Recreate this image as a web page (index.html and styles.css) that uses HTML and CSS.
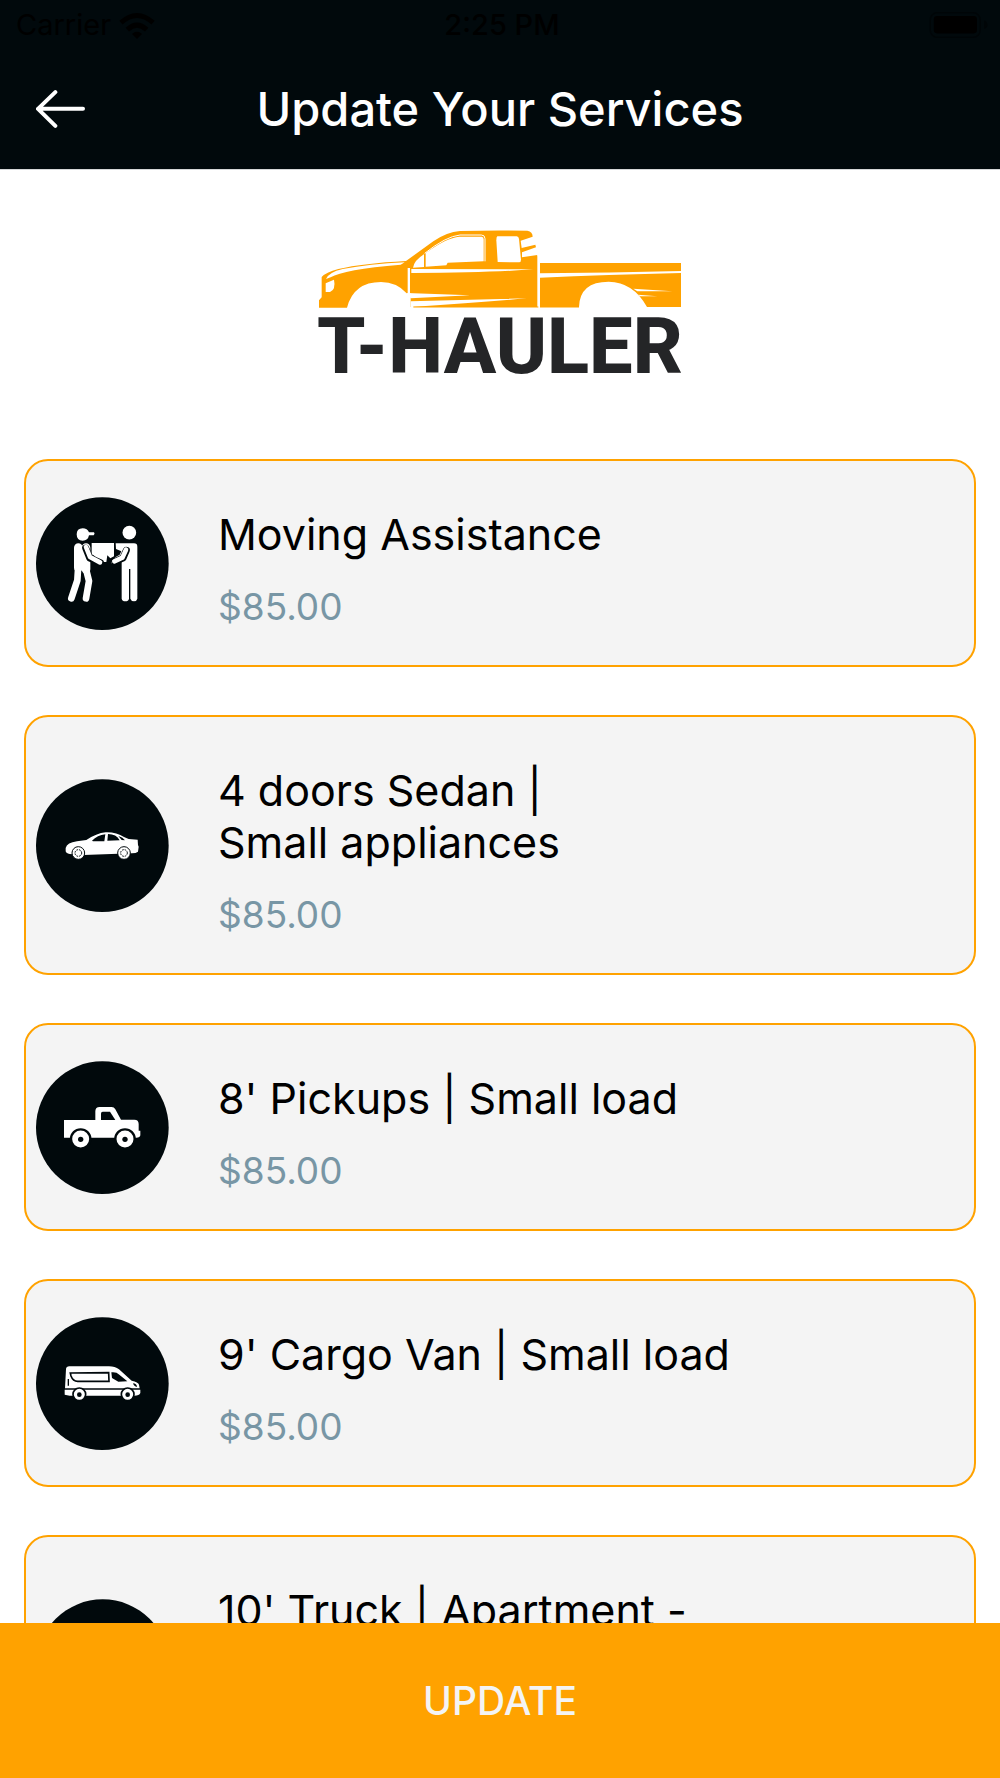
FILE: index.html
```html
<!DOCTYPE html>
<html lang="en">
<head>
  <meta charset="utf-8">
  <meta name="viewport" content="width=device-width, initial-scale=1">
  <title>Update Your Services</title>
  <link rel="stylesheet" href="styles.css">
</head>
<body>
  <header class="header">
    <div class="status">
      <div class="status-carrier">
        <span>Carrier</span>
        <svg class="wifi" viewBox="362 30 108 81" aria-hidden="true">
          <path d="M416 111l-15-15q15-14 30 0z" fill="#000"/>
          <path d="M387 83q29-27 58 0M368 62q48-43 96 0" fill="none" stroke="#000" stroke-width="15"/>
        </svg>
      </div>
      <span class="status-time">2:25 PM</span>
      <svg class="battery" viewBox="1286 34 176 79" aria-hidden="true">
        <rect x="1288" y="36" width="152" height="75" rx="22" fill="none" stroke="#000507" stroke-width="4"/>
        <rect x="1299" y="46" width="131" height="53" rx="10" fill="#000"/>
        <path d="M1452 60q10 4 10 13t-10 13z" fill="#000507"/>
      </svg>
    </div>
    <div class="navbar">
      <button class="back" type="button" aria-label="Back">
        <svg viewBox="108 269 147 113" aria-hidden="true">
          <path d="M166 275l-52 50 52 51M114 325h135" fill="none" stroke="#fff" stroke-width="12" stroke-linecap="round" stroke-linejoin="round"/>
        </svg>
      </button>
      <h1 class="title">Update Your Services</h1>
    </div>
  </header>

  <main class="content">
    <svg class="logo" viewBox="57 60 1086 432" role="img" aria-label="T-Hauler">
      <path fill="#ffa200" d="M57 293V271l8-9V201q12-14 50-24Q190 160 318 153L400 94Q440 66 480 63Q580 60 682 62q16 3 16 18L662 92l3 22 41-10 2 8-42 15v15l46-7 4 10v146H332V250h-12Q290 216 243 216q-82 0-102 77z"/>
      <path fill="#ffa200" d="M720 159h423v132h-102Q1000 216 926 215q-87 0-89 76H720z"/>
      <g fill="#fff">
        <path d="M78 207q8-20 50-30 80-15 186-20l-12 7Q130 178 92 202z"/>
        <path d="M77 220l25-11q6 30-12 37H77z"/>
        <path d="M323 174h7v76h-7zM712 135h7v160h-7z"/>
        <path d="M334 177l366 1q-130 10-360 11h-6z"/>
        <path d="M320 249l190 7-178 9zM332 274l348-9q-150 14-335 25l-13 2z"/>
        <path d="M377 129Q440 83 478 80h67q6 0 6 8v66l-108 4-4 8-62 4z"/>
        <path d="M372 133v38l-33 2q4-22 33-40z"/>
        <path d="M592 79h58q6 0 7 8l6 62q0 8-6 8l-64-1-4-65q0-10 3-12z"/>
        <path d="M719 190q210-2 424-7v6q-220 5-424 14z"/>
        <path d="M1000 236l117 8-105 0zM1014 254l58 5-52 0z"/>
      </g>
      <path d="M374 130Q438 79 480 75h64q11 0 11 11v68" fill="none" stroke="#fff" stroke-width="3"/>
      <path class="logo-road" d="M340 291h375M720 291h117" />
      <text class="logo-name" x="600" y="490" text-anchor="middle">T-HAULER</text>
    </svg>

    <ul class="services">
      <li class="card">
        <svg class="badge" viewBox="49 140 399 399" aria-hidden="true">
          <circle class="disc" cx="248" cy="340" r="199"/>
          <g fill="#fff">
            <path d="M171 252q0-18 18-18 14 0 19 12h15q4 5-1 9h-14q-3 16-19 16-18 0-18-19z"/>
            <circle cx="329" cy="247" r="20.500"/>
            <path d="M216 278h67v40l-11 6-9-9-3 20h-16l-22-20-6-3z"/>
            <path d="M288 279h55q10 0 10 10v156q-2 8-10 8t-11-8V356h-4v89q-2 8-11 8t-11-8V320l-24 20q-7 2-8-6l14-14 12-7 5-10-16-7z"/>
          </g>
          <g fill="none" stroke="#fff" stroke-linecap="round" stroke-linejoin="round">
            <path d="M176 292v60M199 292v65" stroke-width="26"/>
            <path d="M175 358l-2 32-18 54M200 360l8 32-9 52" stroke-width="20"/>
            <path d="M198 293l12 30 32 14M320 300l-10 23-25 11" stroke="#01090c" stroke-width="21"/>
            <path d="M199 290l12 30 30 16M319 298l-11 24-24 11" stroke-width="14"/>
          </g>
        </svg>
        <div class="info">
          <h2 class="name">Moving Assistance</h2>
          <p class="price">$85.00</p>
        </div>
      </li>
      <li class="card">
        <svg class="badge" viewBox="49 55 399 399" aria-hidden="true">
          <circle class="disc" cx="248" cy="255" r="199"/>
          <path fill="#fff" d="M138 262q4-16 34-20l28-4q30-20 58-23 32-1 55 14l14 6 27 2 1 16 2 5-2 15q-6 5-18 5l-145 5-42-3q-12-3-12-9z"/>
          <path class="cut" d="M217 240q16-16 40-19l-3 21h-34zM265 220q25 0 35 19l-37 1zM296 226q14 4 20 13l-10-1z"/>
          <g fill="#fff" stroke="#01090c" stroke-width="3">
            <circle cx="176" cy="277" r="19"/><circle cx="313" cy="277" r="19"/>
          </g>
          <g fill="none" stroke="#01090c" stroke-width="3" stroke-dasharray="5 3">
            <circle cx="176" cy="277" r="10"/><circle cx="313" cy="277" r="10"/>
          </g>
        </svg>
        <div class="info">
          <h2 class="name">4 doors Sedan |<br>Small appliances</h2>
          <p class="price">$85.00</p>
        </div>
      </li>
      <li class="card">
        <svg class="badge" viewBox="49 63 399 399" aria-hidden="true">
          <circle class="disc" cx="248" cy="263" r="199"/>
          <path fill="#fff" d="M133 240h94v-26q0-13 13-13h36q7 0 11 7l17 31h40q13 0 13 13v20h5v14q-1 7-12 7H133z"/>
          <path class="cut" d="M244 240v-20q0-5 5-5h22l16 25z"/>
          <g fill="#fff" stroke="#01090c" stroke-width="7">
            <circle cx="183" cy="297" r="29"/><circle cx="316" cy="297" r="29"/>
          </g>
          <g class="cut"><circle cx="183" cy="298" r="8"/><circle cx="316" cy="298" r="8"/></g>
        </svg>
        <div class="info">
          <h2 class="name">8' Pickups | Small load</h2>
          <p class="price">$85.00</p>
        </div>
      </li>
      <li class="card">
        <svg class="badge" viewBox="49 51 399 399" aria-hidden="true">
          <circle class="disc" cx="248" cy="251" r="199"/>
          <path fill="#fff" d="M136 265l3-58q1-8 10-8h119q18 0 30 9l38 34q20 4 22 12l2 11z"/>
          <path fill="#fff" d="M135 269h227v10q-3 8-18 8H150l-15-3z"/>
          <path class="cut" d="M275 217q15-2 24 7l24 20-27 1-19-11z"/>
          <path d="M152 219l115-1 1 26H174q-14 0-20-16z" fill="#fff" stroke="#01090c" stroke-width="5"/>
          <path class="cut" d="M144 237h4v20h-4zM340 250q11 0 12 11-9-1-12-11z"/>
          <g fill="#fff" stroke="#01090c" stroke-width="5">
            <circle cx="179" cy="283" r="19"/><circle cx="324" cy="283" r="19"/>
          </g>
          <g class="cut"><circle cx="179" cy="284" r="7"/><circle cx="324" cy="284" r="7"/></g>
        </svg>
        <div class="info">
          <h2 class="name">9' Cargo Van | Small load</h2>
          <p class="price">$85.00</p>
        </div>
      </li>
      <li class="card card-tall">
        <svg class="badge" viewBox="0 0 399 399" aria-hidden="true">
          <circle class="disc" cx="200" cy="200" r="199"/>
        </svg>
        <div class="info">
          <h2 class="name">10' Truck | Apartment -</h2>
        </div>
      </li>
    </ul>
  </main>

  <button class="update" type="submit">UPDATE</button>
</body>
</html>
```

FILE: styles.css
```css
* {
  box-sizing: border-box;
}

body {
  margin: 0;
  height: 100vh;
  display: flex;
  flex-direction: column;
  background: #fff;
  color: #000;
  font-family: Inter, "Liberation Sans", sans-serif;
}

.header {
  flex: none;
  padding-bottom: 2px;
  background: #01090c;
  border-bottom: 1px solid #d5d7d8;
}

.status {
  display: grid;
  grid-template-columns: 1fr auto 1fr;
  align-items: center;
  height: 50px;
  padding: 0 12px 0 16px;
  color: #000;
  font-size: 29px;
  line-height: 50px;
}

.status-carrier {
  display: flex;
  align-items: center;
  gap: 8px;
}

.wifi {
  width: 36px;
  height: 27px;
}

.status-time {
  font-weight: 500;
}

.battery {
  justify-self: end;
  width: 59px;
  height: 26px;
}

.navbar {
  display: grid;
  grid-template-columns: 88px 1fr 88px;
  align-items: center;
  height: 117px;
}

.back {
  display: flex;
  justify-content: flex-end;
  padding: 0 3px 0 0;
  border: 0;
  background: none;
}

.back svg {
  width: 49px;
  height: 38px;
}

.title {
  margin: 0;
  color: #fff;
  font-size: 47px;
  font-weight: 500;
  line-height: 56px;
  text-align: center;
}

.content {
  flex: 1;
  min-height: 0;
  padding: 60px 24px 0;
  overflow-y: auto;
  scrollbar-width: none;
}

.logo {
  display: block;
  width: 362px;
  height: 144px;
  margin: 0 auto;
  overflow: visible;
}

.logo-road {
  fill: none;
  stroke: #ffa200;
  stroke-width: 3px;
}

.logo-name {
  fill: #242527;
  font-family: Roboto, "Liberation Sans", sans-serif;
  font-size: 233px;
  font-weight: 800;
}

.services {
  display: flex;
  flex-direction: column;
  gap: 48px;
  margin: 0;
  padding: 85px 0 48px;
  list-style: none;
}

.card {
  display: flex;
  align-items: center;
  gap: 49px;
  padding: 0 10px;
  border: 2px solid #ffa200;
  border-radius: 24px;
  background: #f4f4f4;
}

.card-tall {
  min-height: 260px;
}

.card-tall .info {
  align-self: flex-start;
}

.badge {
  flex: none;
  width: 133px;
  height: 133px;
}

.disc,
.cut {
  fill: #01090c;
}

.info {
  padding: 47px 0 35px;
}

.name {
  margin: 0;
  font-size: 43px;
  font-weight: 400;
  line-height: 52px;
}

.price {
  margin: 24px 0 0;
  color: #7896a5;
  font-size: 37px;
  line-height: 46px;
}

.update {
  flex: none;
  height: 155px;
  padding: 0;
  border: 0;
  background: #ffa200;
  color: #f4f4f4;
  font-family: inherit;
  font-size: 39px;
  font-weight: 500;
}
```
